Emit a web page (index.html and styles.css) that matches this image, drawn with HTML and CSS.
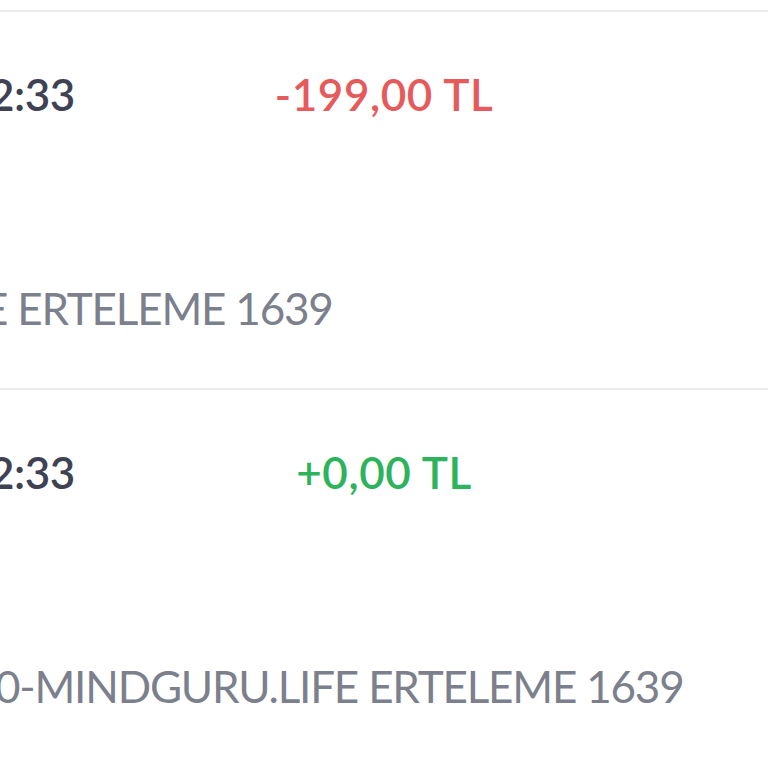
FILE: index.html
```html
<!DOCTYPE html>
<html lang="tr">
<head>
<meta charset="utf-8">
<link rel="stylesheet" href="styles.css">
</head>
<body>
<div class="list">
  <div class="row">
    <div class="head">
      <span class="time">2:33</span>
      <span class="amount neg">-199,00 TL</span>
    </div>
    <div class="desc desc-cut">E ERTELEME 1639</div>
  </div>
  <div class="row">
    <div class="head">
      <span class="time">2:33</span>
      <span class="amount pos">+0,00 TL</span>
    </div>
    <div class="desc">0-MINDGURU.LIFE ERTELEME 1639</div>
  </div>
</div>
</body>
</html>
```
FILE: styles.css
```css
html, body {
  margin: 0;
  padding: 0;
  background: #ffffff;
  overflow: hidden;
}
body {
  width: 768px;
  height: 768px;
  font-family: Lato, "Noto Sans", sans-serif;
}
.list {
  padding-top: 10px;
  margin-left: -5px;
}
.row {
  border-top: 2px solid #ececec;
  height: 376px;
  display: flex;
  flex-direction: column;
}
.head {
  position: relative;
  display: flex;
  align-items: baseline;
  margin-top: 52px;
  height: 60px;
}
.time {
  margin-left: -6px;
  font-size: 44px;
  font-weight: 600;
  letter-spacing: -0.5px;
  color: #3e4253;
  line-height: 60px;
}
.amount {
  position: absolute;
  left: 389px;
  transform: translateX(-50%);
  font-size: 44px;
  font-weight: 600;
  letter-spacing: 0.6px;
  line-height: 60px;
  white-space: nowrap;
}
.neg { color: #e65a5c; }
.pos { color: #2db35b; }
.desc {
  margin-top: 156px;
  font-size: 44px;
  line-height: 56px;
  letter-spacing: -1.2px;
  color: #7c7f8c;
  white-space: nowrap;
}
.desc-cut {
  margin-left: -12px;
}
```
